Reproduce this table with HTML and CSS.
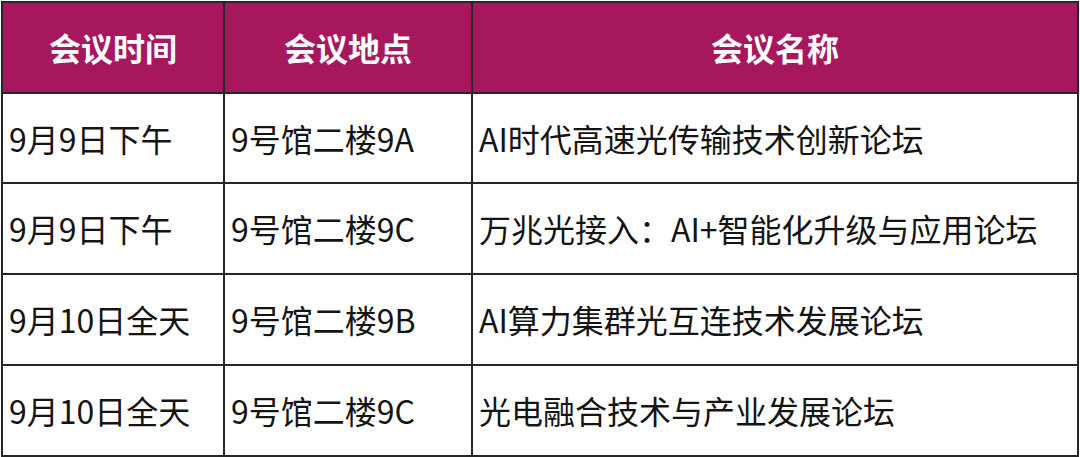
FILE: index.html
```html
<!DOCTYPE html>
<html lang="zh">
<head>
<meta charset="utf-8">
<link rel="stylesheet" href="styles.css">
</head>
<body>
<table class="schedule">
  <colgroup>
    <col class="c-time">
    <col class="c-place">
    <col class="c-name">
  </colgroup>
  <thead>
    <tr>
      <th>会议时间</th>
      <th>会议地点</th>
      <th>会议名称</th>
    </tr>
  </thead>
  <tbody>
    <tr class="row-short">
      <td>9月9日下午</td>
      <td>9号馆二楼9A</td>
      <td>AI时代高速光传输技术创新论坛</td>
    </tr>
    <tr>
      <td>9月9日下午</td>
      <td>9号馆二楼9C</td>
      <td>万兆光接入：AI+智能化升级与应用论坛</td>
    </tr>
    <tr>
      <td>9月10日全天</td>
      <td>9号馆二楼9B</td>
      <td>AI算力集群光互连技术发展论坛</td>
    </tr>
    <tr>
      <td>9月10日全天</td>
      <td>9号馆二楼9C</td>
      <td>光电融合技术与产业发展论坛</td>
    </tr>
  </tbody>
</table>
</body>
</html>
```
FILE: styles.css
```css
html, body {
  margin: 0;
  padding: 0;
  background: #ffffff;
}
.schedule {
  width: 1078px;
  margin: 1px;
  border-collapse: collapse;
  table-layout: fixed;
  font-family: "Noto Sans CJK SC", "Noto Sans", sans-serif;
  font-size: 32px;
  color: #141414;
}
.c-time { width: 222px; }
.c-place { width: 248px; }
.c-name { width: auto; }
.schedule th,
.schedule td {
  border: 2px solid #262626;
  padding: 0 6px;
  height: 91px;
  box-sizing: border-box;
  vertical-align: middle;
  white-space: nowrap;
  line-height: 1.2;
}
.schedule .row-short td {
  height: 90px;
}
.schedule th {
  background: #a6175e;
  color: #ffffff;
  font-weight: 700;
  text-align: center;
}
.schedule td {
  text-align: left;
  font-weight: 400;
}
```
